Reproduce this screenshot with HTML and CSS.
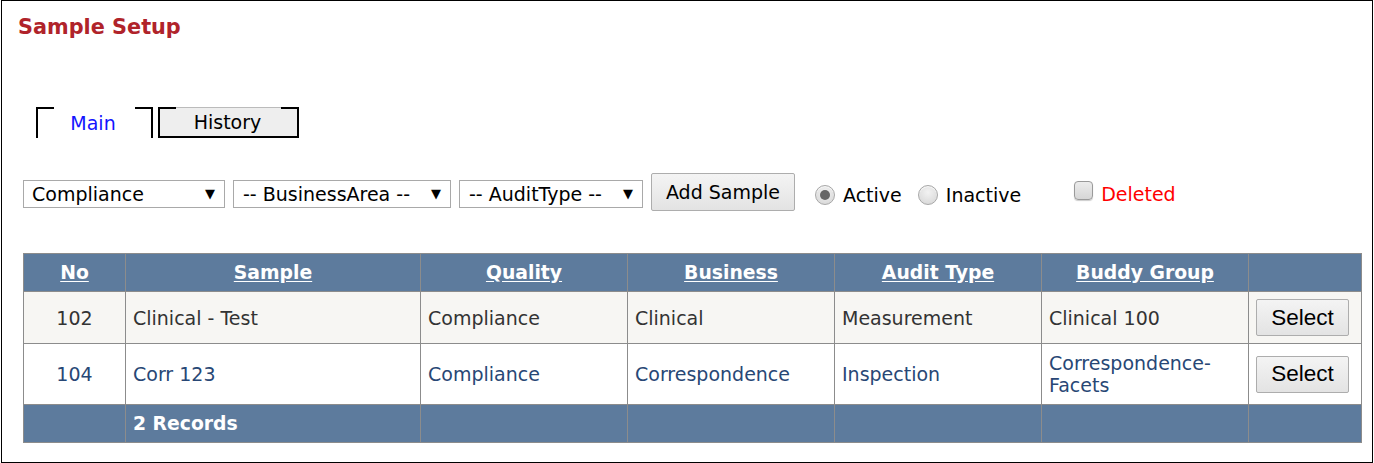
FILE: index.html
```html
<!DOCTYPE html>
<html>
<head>
<meta charset="utf-8">
<link rel="stylesheet" href="styles.css">
</head>
<body>
<div class="frame">
  <h1 class="title">Sample Setup</h1>

  <div class="tabs">
    <div class="tab tab-active"><span>Main</span></div>
    <div class="tab tab-idle"><span>History</span></div>
  </div>

  <div class="filters">
    <span class="sel sel-1"><select><option>Compliance</option></select></span>
    <span class="sel sel-2"><select><option>-- BusinessArea --</option></select></span>
    <span class="sel sel-3"><select><option>-- AuditType --</option></select></span>
    <button class="btn-add">Add Sample</button>
    <label class="opt opt-active"><input type="radio" name="st" checked><span>Active</span></label>
    <label class="opt opt-inactive"><input type="radio" name="st"><span>Inactive</span></label>
    <label class="opt opt-deleted"><input type="checkbox"><span>Deleted</span></label>
  </div>

  <table class="grid">
    <colgroup>
      <col class="c-no"><col class="c-sample"><col class="c-mid"><col class="c-mid"><col class="c-mid"><col class="c-mid"><col class="c-act">
    </colgroup>
    <thead>
      <tr class="head">
        <th><a>No</a></th>
        <th><a>Sample</a></th>
        <th><a>Quality</a></th>
        <th><a>Business</a></th>
        <th><a>Audit Type</a></th>
        <th><a>Buddy Group</a></th>
        <th></th>
      </tr>
    </thead>
    <tbody>
      <tr class="row row-1">
        <td class="num">102</td>
        <td>Clinical - Test</td>
        <td>Compliance</td>
        <td>Clinical</td>
        <td>Measurement</td>
        <td>Clinical 100</td>
        <td><button class="btn-select">Select</button></td>
      </tr>
      <tr class="row row-2">
        <td class="num">104</td>
        <td>Corr 123</td>
        <td>Compliance</td>
        <td>Correspondence</td>
        <td>Inspection</td>
        <td>Correspondence-<br>Facets</td>
        <td><button class="btn-select">Select</button></td>
      </tr>
    </tbody>
    <tfoot>
      <tr class="foot">
        <td></td>
        <td>2 Records</td>
        <td></td><td></td><td></td><td></td><td></td>
      </tr>
    </tfoot>
  </table>
</div>
</body>
</html>
```

FILE: styles.css
```css
html, body {
  margin: 0;
  padding: 0;
  background: #fff;
}

body {
  font-family: "DejaVu Sans", Verdana, sans-serif;
  font-size: 19px;
  color: #000;
}

.frame {
  box-sizing: border-box;
  width: 1372px;
  height: 463px;
  margin-left: 1px;
  border: 1px solid #000;
  padding: 14px 0 0 16px;
}

.title {
  margin: 0;
  font-size: 20.8px;
  line-height: 24px;
  font-weight: bold;
  color: #b0232a;
}

/* Tabs */
.tabs {
  display: flex;
  gap: 5px;
  margin: 68px 0 0 18px;
}

.tab {
  position: relative;
  box-sizing: border-box;
  height: 31px;
  display: flex;
  align-items: center;
  justify-content: center;
  border-left: 2px solid #000;
  border-right: 2px solid #000;
}

.tab::before,
.tab::after {
  content: "";
  position: absolute;
  top: 0;
  width: 16px;
  height: 2px;
  background: #000;
}
.tab::before { left: 0; }
.tab::after { right: 0; }

.tab-active {
  width: 117px;
  color: #1414ff;
}

.tab-active span { margin-right: 3px; }

.tab-idle {
  width: 141px;
  background: #eeeeee;
  border-bottom: 2px solid #000;
  box-shadow: inset 0 1px 0 #bbb;
  color: #000;
}

.tab span {
  line-height: 22px;
}
.tab-idle span { padding-top: 1px; margin-right: 2px; }

/* Filters */
.filters {
  display: flex;
  align-items: center;
  margin: 35px 0 0 5px;
  height: 38px;
}

.sel {
  position: relative;
  display: inline-block;
  margin: 4px 8px 0 0;
}

.sel::after {
  content: "\25BC";
  position: absolute;
  top: 7px;
  right: 10px;
  font-size: 13px;
  line-height: 14px;
  color: #000;
  pointer-events: none;
}

.sel select {
  appearance: none;
  -webkit-appearance: none;
  box-sizing: border-box;
  height: 28px;
  border: 1px solid #a9a9a9;
  border-radius: 0;
  background: #fff;
  font-family: "DejaVu Sans", Verdana, sans-serif;
  font-size: 19px;
  color: #000;
  padding: 0 0 0 8px;
  margin: 0;
  display: block;
}

.sel-1 select { width: 202px; }
.sel-2 select { width: 218px; }
.sel-3 select { width: 184px; }
.sel-2 select, .sel-3 select { padding-left: 9px; }

.btn-add {
  box-sizing: border-box;
  width: 144px;
  height: 38px;
  margin: 0 20px 0 0;
  border: 1px solid #adadad;
  border-radius: 2px;
  background: linear-gradient(#f4f4f4, #e3e3e3);
  font-family: "DejaVu Sans", Verdana, sans-serif;
  font-size: 19px;
  color: #000;
  padding: 0;
}

.opt {
  display: inline-flex;
  align-items: center;
  margin-top: 5px;
}

.opt input {
  appearance: none;
  -webkit-appearance: none;
  margin: 0 8px 0 0;
  box-sizing: border-box;
  border: 1px solid #a8a8a8;
  background: radial-gradient(circle at 50% 35%, #f2f2f2, #d4d4d4);
  box-shadow: inset 0 1px 1px rgba(255,255,255,0.8);
}

.opt input[type="radio"] {
  width: 20px;
  height: 20px;
  border-radius: 50%;
  position: relative;
}

.opt input[type="radio"]:checked::after {
  content: "";
  position: absolute;
  left: 4px;
  top: 4px;
  width: 10px;
  height: 10px;
  border-radius: 50%;
  background: #666;
}

.opt-active { margin-right: 16px; }
.opt-inactive { margin-right: 53px; }

.opt-deleted { margin-top: -4px; }
.opt-deleted input {
  width: 19px;
  height: 19px;
  border-radius: 4px;
  margin-right: 8px;
  border-color: #9a9a9a;
  background: linear-gradient(#ececec, #d6d6d6);
  box-shadow: 0 1px 1px rgba(0,0,0,0.2);
}
.opt-deleted span {
  color: #ff0000;
  margin-top: 7px;
}

/* Grid */
.grid {
  margin: 42px 0 0 5px;
  border-collapse: collapse;
  table-layout: fixed;
  width: 1339px;
  border: 1px solid #8c8c8c;
}

.c-no { width: 102px; }
.c-sample { width: 295px; }
.c-mid { width: 207px; }
.c-act { width: 113px; }

.grid th,
.grid td {
  border: 1px solid #8c8c8c;
  padding: 0 7px;
  line-height: 22px;
  text-align: left;
  vertical-align: middle;
}

.head {
  height: 38px;
  background: #5d7b9d;
}

.head th {
  color: #fff;
  font-weight: bold;
  font-size: 18.8px;
  text-align: center;
}

.head th a {
  color: #fff;
  text-decoration: underline;
  text-underline-offset: 2px;
}

.row-1 {
  height: 52px;
  background: #f7f6f3;
  color: #333;
}

.row-2 {
  height: 61px;
  background: #fff;
  color: #284775;
}

.grid td.num { text-align: center; }

.foot {
  height: 38px;
  background: #5d7b9d;
  color: #fff;
  font-weight: bold;
  font-size: 18.8px;
}

.btn-select {
  box-sizing: border-box;
  width: 93px;
  height: 37px;
  border: 1px solid #adadad;
  border-radius: 2px;
  background: linear-gradient(#f4f4f4, #e3e3e3);
  font-family: "Liberation Sans", Arial, sans-serif;
  font-size: 22.5px;
  color: #000;
  padding: 0;
  display: block;
}
```
